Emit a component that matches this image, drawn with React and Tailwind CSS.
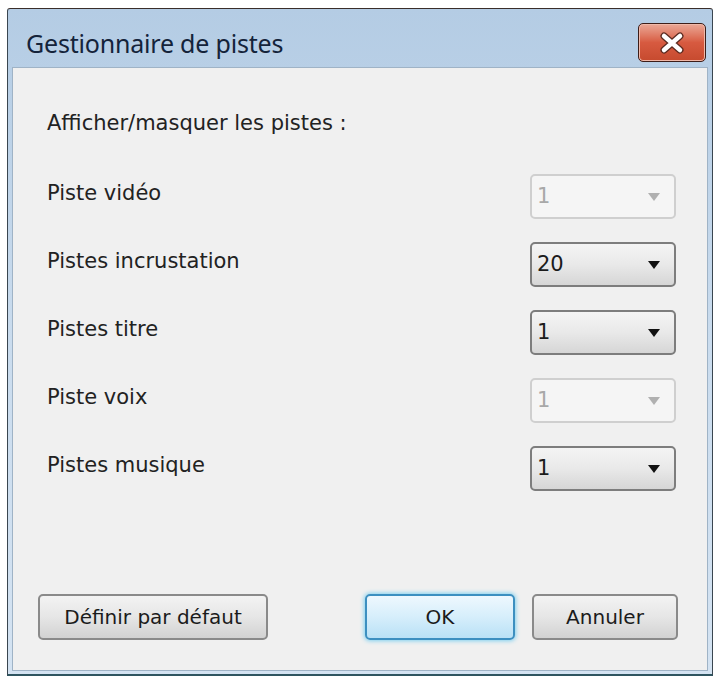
import React from 'react';

const rows = [
  { label: 'Piste vidéo', value: '1', disabled: true },
  { label: 'Pistes incrustation', value: '20', disabled: false },
  { label: 'Pistes titre', value: '1', disabled: false },
  { label: 'Piste voix', value: '1', disabled: true },
  { label: 'Pistes musique', value: '1', disabled: false },
];

const Combo = ({ value, disabled }) => (
  <div
    className={
      disabled
        ? 'w-[146px] h-[45px] flex items-center justify-between pl-[5px] pr-[14px] rounded-[5px] border-2 border-[#cfcfcf] bg-[#f5f5f5] text-[#a8a8a8]'
        : 'w-[146px] h-[45px] flex items-center justify-between pl-[5px] pr-[14px] rounded-[5px] border-2 border-[#7d7d7d] bg-gradient-to-b from-[#f4f4f4] via-[#e9e9e9] to-[#d6d6d6] text-[#1b1b1b]'
    }
  >
    <span>{value}</span>
    <svg width="12" height="8" viewBox="0 0 12 8">
      <path d="M0 0 H12 L6 8 Z" fill={disabled ? '#b0b0b0' : '#111'} />
    </svg>
  </div>
);

const Button = ({ children, primary, className }) => (
  <button
    className={
      (primary
        ? 'border-2 border-[#3c8fc0] shadow-[0_0_4px_1px_#7fd0f0] bg-gradient-to-b from-[#eef8fe] via-[#d6eefb] to-[#b9e1f6] '
        : 'border-2 border-[#8a8a8a] bg-gradient-to-b from-[#f3f3f3] via-[#e6e6e6] to-[#d2d2d2] ') +
      'h-[46px] rounded-[5px] text-[#1b1b1b] text-[20px] flex items-center justify-center ' +
      className
    }
  >
    {children}
  </button>
);

const App = () => {
  return (
    <div className="w-[715px] h-[679px] bg-white pt-[8px] pl-[7px]" style={{ fontFamily: '"DejaVu Sans", sans-serif' }}>
      {/* Window */}
      <div className="w-[706px] h-[668px] border border-[#3a4650] border-t-[#3a2e2a] border-b-2 border-b-[#2f5560] rounded-t-[3px] bg-gradient-to-b from-[#b4cce4] via-[#cadcee] to-[#d4e3f2] flex flex-col px-[4px] pb-[3px]">
        {/* Title bar */}
        <div className="h-[58px] flex items-start justify-between">
          <span
            className="mt-[19px] ml-[14px] text-[25px] leading-[30px] text-[#14233a] tracking-[-0.2px]"
            style={{ fontFamily: '"Noto Sans", sans-serif' }}
          >
            Gestionnaire de pistes
          </span>
          <div className="mt-[14px] mr-[2px] w-[68px] h-[39px] rounded-[5px] border border-[#3d1d18] bg-gradient-to-b from-[#e9a796] via-[#d75a40] to-[#c64a2e] flex items-center justify-center shadow-[inset_0_0_0_1px_#f0b8a8]">
            <svg width="26" height="22" viewBox="0 0 26 22">
              <path d="M5 4 L21 18 M21 4 L5 18" stroke="#5a2a20" strokeWidth="7" strokeLinecap="round" />
              <path d="M5 4 L21 18 M21 4 L5 18" stroke="#ffffff" strokeWidth="4.5" strokeLinecap="round" />
            </svg>
          </div>
        </div>

        {/* Content */}
        <div className="flex-1 bg-[#f0f0f0] border border-[#9fb3c6] flex flex-col text-[21px] text-[#222]">
          <div className="pt-[43px] pl-[34px] leading-[24px]">Afficher/masquer les pistes :</div>

          <div className="mt-[39px] pl-[34px] pr-[31px] flex flex-col gap-[23px]">
            {rows.map((r) => (
              <div key={r.label} className="flex items-center justify-between h-[45px]">
                <span className="-mt-[6px]">{r.label}</span>
                <Combo value={r.value} disabled={r.disabled} />
              </div>
            ))}
          </div>

          <div className="flex-1" />

          <div className="flex items-center pl-[25px] pr-[29px] pb-[30px]">
            <Button className="w-[230px]">Définir par défaut</Button>
            <div className="flex-1" />
            <Button primary className="w-[150px]">OK</Button>
            <Button className="w-[146px] ml-[17px]">Annuler</Button>
          </div>
        </div>
      </div>
    </div>
  );
};

export default App;
